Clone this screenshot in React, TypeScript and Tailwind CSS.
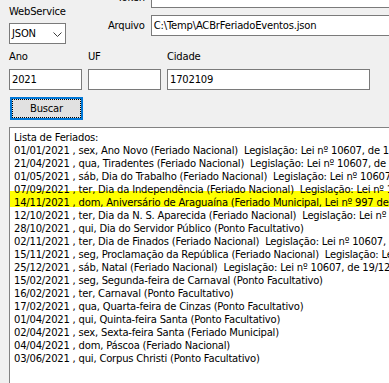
const feriados = [
  '01/01/2021 , sex, Ano Novo (Feriado Nacional)  Legislação: Lei nº 10607, de 19/12/2002',
  '21/04/2021 , qua, Tiradentes (Feriado Nacional)  Legislação: Lei nº 10607, de 19/12/2002',
  '01/05/2021 , sáb, Dia do Trabalho (Feriado Nacional)  Legislação: Lei nº 10607, de 19/12/2002',
  '07/09/2021 , ter, Dia da Independência (Feriado Nacional)  Legislação: Lei nº 10607, de 19/12/2002',
  '14/11/2021 , dom, Aniversário de Araguaína (Feriado Municipal, Lei nº 997 de 1999)',
  '12/10/2021 , ter, Dia da N. S. Aparecida (Feriado Nacional)  Legislação: Lei nº 6802, de 30/06/1980',
  '28/10/2021 , qui, Dia do Servidor Público (Ponto Facultativo)',
  '02/11/2021 , ter, Dia de Finados (Feriado Nacional)  Legislação: Lei nº 10607, de 19/12/2002',
  '15/11/2021 , seg, Proclamação da República (Feriado Nacional)  Legislação: Lei nº 10607, de 19/12/2002',
  '25/12/2021 , sáb, Natal (Feriado Nacional)  Legislação: Lei nº 10607, de 19/12/2002',
  '15/02/2021 , seg, Segunda-feira de Carnaval (Ponto Facultativo)',
  '16/02/2021 , ter, Carnaval (Ponto Facultativo)',
  '17/02/2021 , qua, Quarta-feira de Cinzas (Ponto Facultativo)',
  '01/04/2021 , qui, Quinta-feira Santa (Ponto Facultativo)',
  '02/04/2021 , sex, Sexta-feira Santa (Feriado Municipal)',
  '04/04/2021 , dom, Páscoa (Feriado Nacional)',
  '03/06/2021 , qui, Corpus Christi (Ponto Facultativo)',
];

function Edit({ value, className }: { value?: string; className: string }) {
  return (
    <div className={`flex h-[21px] items-center border border-[#7a7a7a] bg-white pl-[2px] whitespace-pre ${className}`}>
      {value}
    </div>
  );
}

export default function App() {
  return (
    <div className="h-[383px] w-[389px] overflow-hidden bg-[#f0f0f0] font-['DejaVu_Sans',sans-serif] text-[10px] leading-[13px] tracking-[-0.2px] text-black">
      <div className="-mt-[13px] flex flex-col pl-[9px]">
        {/* top: webservice + token/arquivo */}
        <div className="flex items-start">
          <div className="flex w-[73px] flex-col pt-[18px]">
            <div className="h-[13px]">WebService</div>
            <div className="mt-[5px] flex h-[21px] items-center justify-between border border-[#7a7a7a] bg-white pl-[2px] pr-[3px]">
              <span>JSON</span>
              <svg width="9" height="5" viewBox="0 0 9 5" className="mt-[1px]">
                <path d="M0.5 0.5 L4.5 4.5 L8.5 0.5" fill="none" stroke="#3c3c3c" strokeWidth="1" />
              </svg>
            </div>
          </div>
          <div className="flex flex-col gap-[7px]">
            <div className="flex items-center">
              <div className="w-[79px] text-right">Token</div>
              <Edit className="ml-[6px] w-[240px]" />
            </div>
            <div className="flex items-center">
              <div className="w-[79px] text-right">Arquivo</div>
              <Edit className="ml-[6px] w-[240px]" value="C:\Temp\ACBrFeriadoEventos.json" />
            </div>
          </div>
        </div>

        {/* ano / uf / cidade */}
        <div className="mt-[6px] flex gap-[6px]">
          <div className="w-[73px]">Ano</div>
          <div className="w-[73px]">UF</div>
          <div className="w-[203px]">Cidade</div>
        </div>
        <div className="mt-[6px] flex gap-[6px]">
          <Edit className="w-[73px]" value="2021" />
          <Edit className="w-[73px]" />
          <Edit className="w-[203px]" value="1702109" />
        </div>

        <button className="ml-[1px] mt-[7px] h-[23px] w-[73px] border-2 border-[#0078d7] bg-[#e1e1e1] p-0">
          <div className="flex h-full w-full items-center justify-center border border-dotted border-black">
            Buscar
          </div>
        </button>

        {/* memo */}
        <div className="mt-[7px] h-[300px] w-[420px] overflow-hidden border-l border-t border-[#828282] bg-white pl-[4px] pt-[3px]">
          <div className="whitespace-pre">Lista de Feriados:</div>
          {feriados.map((linha, i) =>
            i === 4 ? (
              <div key={i} className="-ml-[4px] -mt-[5px] mb-[2px] h-[16px] whitespace-pre bg-[#ffff00] pl-[4px] pt-[5px]">
                {linha}
              </div>
            ) : (
              <div key={i} className="whitespace-pre">
                {linha}
              </div>
            )
          )}
        </div>
      </div>
    </div>
  );
}
